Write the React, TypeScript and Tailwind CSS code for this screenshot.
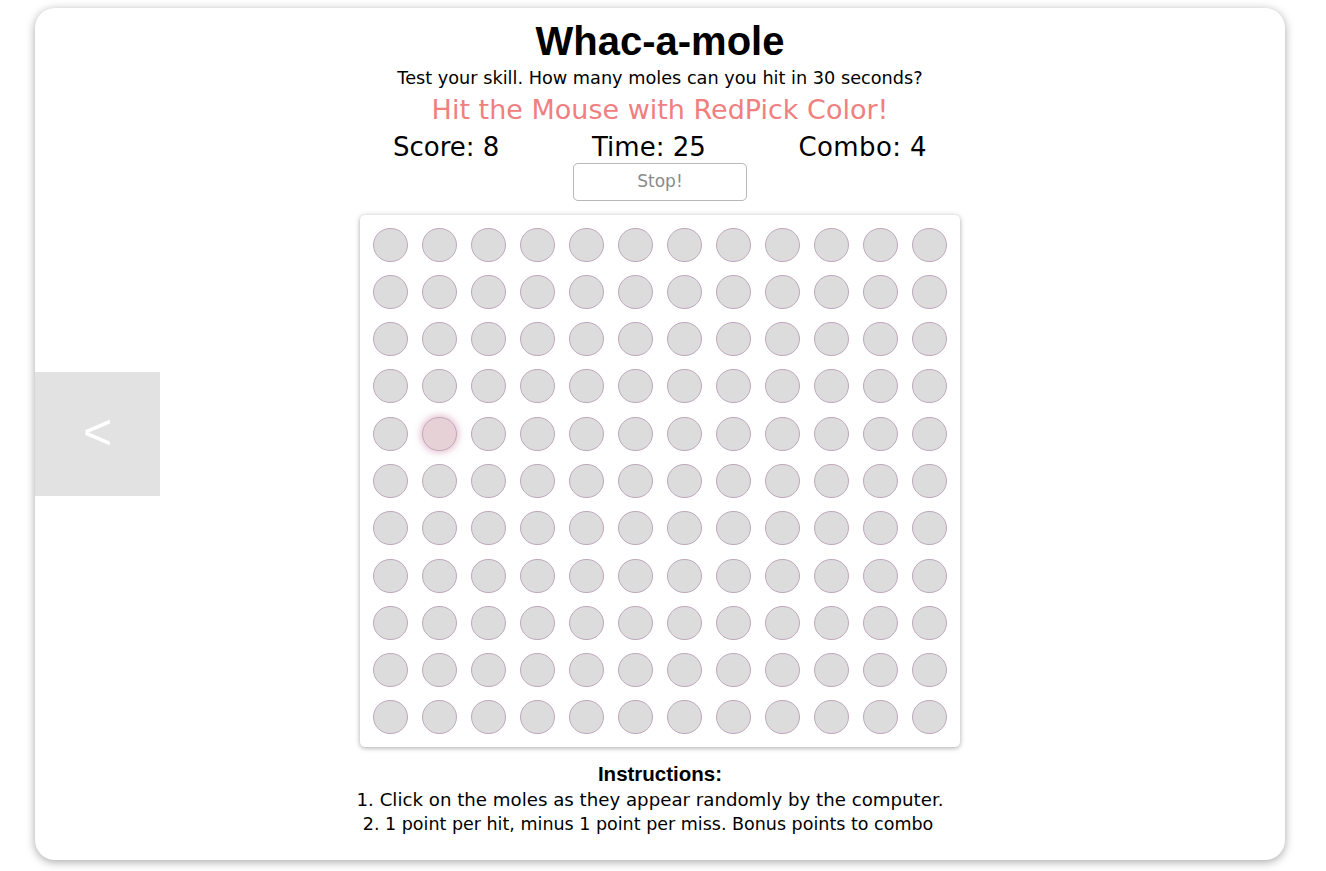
import React from "react";

const ROWS = 11;
const COLS = 12;

const dv = { fontFamily: '"DejaVu Sans", "Liberation Sans", sans-serif' };

export default function App() {
  const cells = [];
  for (let r = 0; r < ROWS; r++) {
    for (let c = 0; c < COLS; c++) {
      const active = r === 4 && c === 1;
      cells.push(
        <div key={`${r}-${c}`} className="flex items-center justify-center">
          <div
            className={
              active
                ? "w-[35px] h-[34px] rounded-full border-[1.5px] border-[#c6a9bb] bg-[#e6d1d7] shadow-[0_0_6px_2px_rgba(205,150,175,0.55)]"
                : "w-[35px] h-[34px] rounded-full border-[1.5px] border-[#bfa8bd] bg-[#dcdcdc]"
            }
          />
        </div>
      );
    }
  }

  return (
    <div
      className="w-[1326px] h-[871px] bg-white pt-[8px] pl-[35px]"
      style={{ fontFamily: '"Liberation Sans", Arial, sans-serif' }}
    >
      <div className="w-[1250px] h-[852px] bg-white rounded-[20px] shadow-[0_2px_10px_rgba(0,0,0,0.35)] grid grid-cols-[125px_1fr_125px] overflow-hidden">
        <div className="flex items-center">
          <div className="w-[125px] h-[124px] bg-[#e2e2e2] flex items-center justify-center text-white text-[50px] leading-none pb-[4px]">
            &lt;
          </div>
        </div>
        <div className="flex flex-col items-center pt-[10px] text-black">
          <h1 className="text-[40px] leading-[46px] font-bold">Whac-a-mole</h1>
          <p className="text-[17.7px] leading-[29px]" style={dv}>
            Test your skill. How many moles can you hit in 30 seconds?
          </p>
          <p className="text-[27px] leading-[34px] text-[#f08080]" style={dv}>
            Hit the Mouse with RedPick Color!
          </p>
          <div className="w-[534px] flex justify-between text-[26px] leading-[36px] pt-[2px] h-[36px]" style={dv}>
            <span>Score: 8</span>
            <span>Time: 25</span>
            <span className="tracking-[0.4px]">Combo: 4</span>
          </div>
          <button
            className="mt-[0px] w-[174px] h-[38px] border border-[#b8b8b8] rounded-[5px] bg-white text-[17px] text-[#8a8a8a]"
            style={dv}
          >
            Stop!
          </button>
          <div className="mt-[14px] w-[600px] h-[532px] bg-white rounded-[5px] shadow-[0_1px_5px_rgba(0,0,0,0.35)] p-[6px] grid grid-cols-[repeat(12,49px)] grid-rows-[repeat(11,1fr)]">
            {cells}
          </div>
          <h2 className="mt-[14px] text-[20.5px] leading-[26px] font-bold">Instructions:</h2>
          <p className="text-[18.2px] leading-[25px] pr-[20px]" style={dv}>
            1. Click on the moles as they appear randomly by the computer.
          </p>
          <p className="text-[17.5px] leading-[25px] pr-[24px]" style={dv}>
            2. 1 point per hit, minus 1 point per miss. Bonus points to combo
          </p>
        </div>
        <div />
      </div>
    </div>
  );
}
